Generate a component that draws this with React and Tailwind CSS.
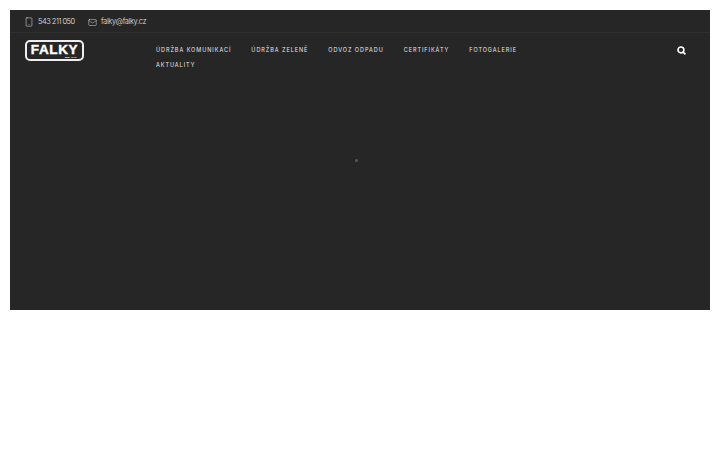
import { Mail, Smartphone } from "lucide-react";

const links = ["ÚDRŽBA KOMUNIKACÍ", "ÚDRŽBA ZELENĚ", "ODVOZ ODPADU", "CERTIFIKÁTY", "FOTOGALERIE", "AKTUALITY"];

const Logo = () => (
  <div className="relative flex h-[21px] w-[59px] items-start justify-center rounded-[5px] border-2 border-[#eeeeee] pt-[2.5px]">
    <span className="font-['Liberation_Sans',sans-serif] text-[13.5px] leading-[10px] font-bold tracking-[0.6px] text-white [-webkit-text-stroke:0.4px_white]">
      FALKY
    </span>
    <span className="absolute right-[5px] bottom-0 font-['Liberation_Sans',sans-serif] text-[2.5px] leading-none font-bold text-white">
      spol. s r.o.
    </span>
  </div>
);

export default function App() {
  return (
    <div className="min-h-[450px] bg-white p-[10px] font-['Inter',sans-serif]">
      <section className="h-[300px] bg-[#262626]">
        <div className="flex h-[23px] items-center border-b border-[#2e2e2e] pt-[2px] pl-[14px] text-[7.5px] font-light text-[#e4e4e4]">
          <div className="flex items-center gap-[4px]">
            <Smartphone size={10} strokeWidth={1.25} />
            <span className="w-[35px] tracking-[-0.5px] whitespace-nowrap">543 211 050</span>
          </div>
          <div className="ml-[15px] flex items-center gap-[4px]">
            <Mail size={9} strokeWidth={1.25} />
            <span className="tracking-[-0.35px] whitespace-nowrap">falky@falky.cz</span>
          </div>
        </div>

        <div className="flex items-start pt-[7px] pl-[15px] pr-[24px]">
          <Logo />
          <nav className="ml-[72px] flex w-[400px] flex-wrap gap-x-[20px] gap-y-[4px] pt-[5px]">
            {links.map((link) => (
              <a key={link} className="h-[11px] text-[5.5px] leading-[11px] tracking-[0.95px] whitespace-nowrap text-[#e8e8e8]">
                {link}
              </a>
            ))}
          </nav>
          <svg className="mt-[6px] ml-auto" width="9" height="9" viewBox="0 0 8 8" fill="none">
            <circle cx="3.5" cy="3.5" r="2.6" stroke="white" strokeWidth="1.4" />
            <path d="M5.5 5.5 7.5 7.5" stroke="white" strokeWidth="1.5" />
          </svg>
        </div>

        <div className="flex h-[200px] justify-center pt-[88px] pr-[8px]">
          <div className="size-[3px] rounded-full bg-[#5a5a5a]" />
        </div>
      </section>
    </div>
  );
}
